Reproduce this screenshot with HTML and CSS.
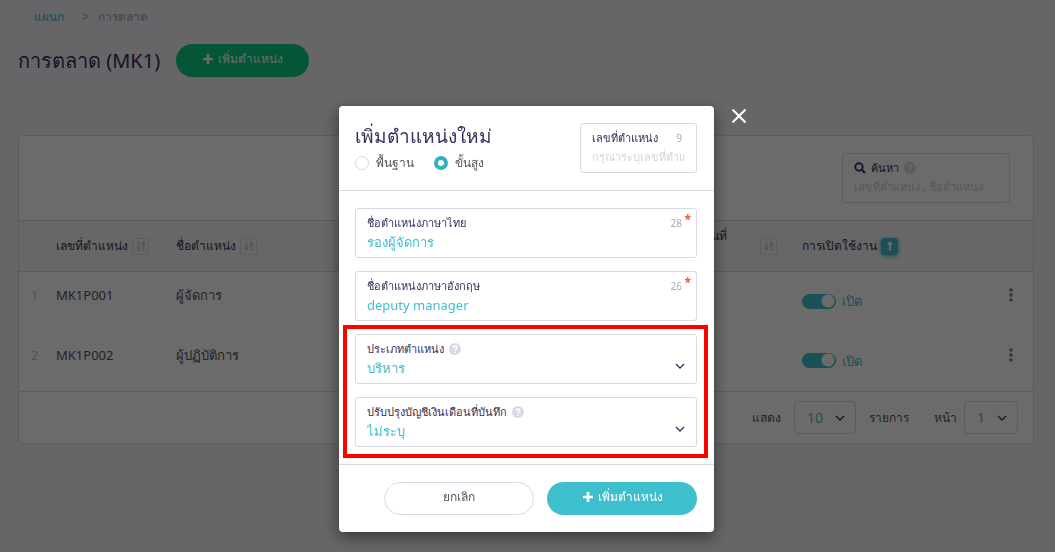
FILE: index.html
```html
<!DOCTYPE html>
<html lang="th">
<head>
<meta charset="utf-8">
<meta name="viewport" content="width=device-width, initial-scale=1">
<title>การตลาด (MK1)</title>
<link rel="stylesheet" href="styles.css">
</head>
<body>
<svg class="sprite" aria-hidden="true">
  <symbol id="plus" viewBox="0 0 12 12"><path d="M6 1v10M1 6h10" fill="none" stroke="currentColor" stroke-width="2.6"/></symbol>
  <symbol id="chevron" viewBox="0 0 10 10"><path d="M1 3l4 4 4-4" fill="none" stroke="currentColor" stroke-width="1.3"/></symbol>
  <symbol id="help" viewBox="0 0 12 12"><circle cx="6" cy="6" r="6" fill="currentColor"/><path d="M4.1 4.7C4.2 2.3 7.9 2.400 7.900 4.600C7.900 6 6 5.900 6 7.300" fill="none" stroke="#fff" stroke-width="1.400"/><circle cx="6" cy="9.200" r=".9" fill="#fff"/></symbol>
  <symbol id="sort" viewBox="0 0 12 12"><path d="M3.500 1v8M8.500 11V3" fill="none" stroke="currentColor" stroke-width="1.800"/><path d="M.8 7.500h5.400L3.500 11zM5.800 4.500h5.400L8.500 1z" fill="currentColor"/></symbol>
  <symbol id="up" viewBox="0 0 12 12"><path d="M6 11V3" fill="none" stroke="currentColor" stroke-width="1.800"/><path d="M3 5h6L6 1z" fill="currentColor"/></symbol>
  <symbol id="search" viewBox="0 0 12 12"><circle cx="5" cy="5" r="3.700" fill="none" stroke="currentColor" stroke-width="1.900"/><path d="M7.800 7.800l3.200 3.200" stroke="currentColor" stroke-width="2.200"/></symbol>
  <symbol id="dots" viewBox="0 0 6 14"><g fill="none" stroke="currentColor" stroke-width=".9"><circle cx="3" cy="2" r="1.200"/><circle cx="3" cy="7" r="1.200"/><circle cx="3" cy="12" r="1.200"/></g></symbol>
</svg>

<div class="page">
  <nav class="crumbs"><a href="#">แผนก</a><span>&gt;</span><span>การตลาด</span></nav>
  <header class="heading">
    <h1>การตลาด (MK1)</h1>
    <button class="btn btn-green" type="button"><svg class="icon"><use href="#plus"/></svg>เพิ่มตำแหน่ง</button>
  </header>
  <main class="card">
    <div class="toolbar">
      <div class="field search">
        <label for="q"><svg class="icon"><use href="#search"/></svg> ค้นหา <svg class="icon help"><use href="#help"/></svg></label>
        <input id="q" type="text" placeholder="เลขที่ตำแหน่ง , ชื่อตำแหน่ง">
      </div>
    </div>
    <table>
      <colgroup><col class="c-num"><col class="c-code"><col class="c-name"><col class="c-date"><col class="c-status"><col class="c-menu"></colgroup>
      <thead>
        <tr>
          <th></th>
          <th><div class="head">เลขที่ตำแหน่ง<button class="sort" type="button" aria-label="เลขที่ตำแหน่ง"><svg class="icon"><use href="#sort"/></svg></button></div></th>
          <th><div class="head">ชื่อตำแหน่ง<button class="sort" type="button" aria-label="ชื่อตำแหน่ง"><svg class="icon"><use href="#sort"/></svg></button></div></th>
          <th><div class="head date"><span>วันที่</span><button class="sort" type="button" aria-label="วันที่"><svg class="icon"><use href="#sort"/></svg></button></div></th>
          <th><div class="head">การเปิดใช้งาน<button class="sort active" type="button" aria-label="การเปิดใช้งาน"><svg class="icon"><use href="#up"/></svg></button></div></th>
          <th></th>
        </tr>
      </thead>
      <tbody>
        <tr>
          <td class="num">1</td><td>MK1P001</td><td>ผู้จัดการ</td><td></td>
          <td><label class="switch"><input type="checkbox" checked>เปิด</label></td>
          <td><button class="more" type="button" aria-label="MK1P001"><svg><use href="#dots"/></svg></button></td>
        </tr>
        <tr>
          <td class="num">2</td><td>MK1P002</td><td>ผู้ปฏิบัติการ</td><td></td>
          <td><label class="switch"><input type="checkbox" checked>เปิด</label></td>
          <td><button class="more" type="button" aria-label="MK1P002"><svg><use href="#dots"/></svg></button></td>
        </tr>
      </tbody>
    </table>
    <footer class="pager">
      <label for="size">แสดง</label>
      <div class="pick"><select id="size"><option>10</option></select><svg class="icon chev"><use href="#chevron"/></svg></div>
      <span class="unit">รายการ</span>
      <label for="pg">หน้า</label>
      <div class="pick small"><select id="pg"><option>1</option></select><svg class="icon chev"><use href="#chevron"/></svg></div>
    </footer>
  </main>
</div>

<div class="overlay">
  <form class="modal" role="dialog" aria-labelledby="dlg">
    <button class="close" type="button" aria-label="ปิด"><svg viewBox="0 0 16 16"><path d="M1.500 1.500l13 13M14.500 1.500l-13 13" stroke="currentColor" stroke-width="2.200"/></svg></button>
    <div class="modal-head">
      <div class="intro">
        <h2 id="dlg">เพิ่มตำแหน่งใหม่</h2>
        <div class="radios">
          <label><input type="radio" name="mode">พื้นฐาน</label>
          <label><input type="radio" name="mode" checked>ขั้นสูง</label>
        </div>
      </div>
      <div class="field code">
        <label for="code">เลขที่ตำแหน่ง<span class="count">9</span></label>
        <input id="code" type="text" placeholder="กรุณาระบุเลขที่ตำแหน่ง">
      </div>
    </div>
    <div class="modal-body">
      <div class="field">
        <label for="th">ชื่อตำแหน่งภาษาไทย<span class="count">28</span></label>
        <input id="th" type="text" value="รองผู้จัดการ"><span class="req">*</span>
      </div>
      <div class="field">
        <label for="en">ชื่อตำแหน่งภาษาอังกฤษ<span class="count">26</span></label>
        <input id="en" type="text" value="deputy manager"><span class="req">*</span>
      </div>
      <div class="marked">
        <div class="field">
          <label for="type">ประเภทตำแหน่ง<svg class="icon help"><use href="#help"/></svg></label>
          <div class="drop"><select id="type"><option>บริหาร</option></select><svg class="icon chev"><use href="#chevron"/></svg></div>
        </div>
        <div class="field">
          <label for="acc">ปรับปรุงบัญชีเงินเดือนที่บันทึก<svg class="icon help"><use href="#help"/></svg></label>
          <div class="drop"><select id="acc"><option>ไม่ระบุ</option></select><svg class="icon chev"><use href="#chevron"/></svg></div>
        </div>
      </div>
    </div>
    <div class="modal-foot">
      <button class="btn btn-line" type="button">ยกเลิก</button>
      <button class="btn btn-teal" type="submit"><svg class="icon"><use href="#plus"/></svg>เพิ่มตำแหน่ง</button>
    </div>
  </form>
</div>
</body>
</html>
```
FILE: styles.css
```css
* { box-sizing: border-box; }
:root { --teal: #3ebfcd; --ink: #35305c; --line: #d9d8e6; }
body {
  margin: 0;
  background: #f3f3f8;
  color: #55545f;
  font: 13px/20px "Noto Sans", "Open Sans", sans-serif;
}
button, input, select { margin: 0; padding: 0; border: 0; background: none; font: inherit; color: inherit; }
h1, h2 { margin: 0; font-weight: 400; color: var(--ink); }
a { color: var(--teal); text-decoration: none; }
.sprite { position: absolute; width: 0; height: 0; }
.icon { width: 12px; height: 12px; flex: none; }
.chev { width: 10px; height: 10px; color: var(--ink); pointer-events: none; }
.help { color: var(--line); }

.page { padding: 7px 21px 20px 18px; }
.crumbs { display: flex; gap: 9px; padding-left: 16px; font-size: 12px; color: #a09fa8; }
.crumbs a { margin-right: 9px; }
.heading { display: flex; align-items: center; gap: 16px; margin: 17px 0 58px; }
.heading h1 { font-size: 20px; line-height: 32px; }

.btn {
  display: flex; align-items: center; justify-content: center; gap: 4px;
  width: 150px; height: 33px; padding-bottom: 3px; border-radius: 17px; font-size: 12px;
}
.btn-green { width: 133px; background: #0cca83; color: #fff; }
.btn-teal { background: var(--teal); color: #fff; }
.btn-line { border: 1px solid var(--line); }

.card { background: #fff; border: 1px solid var(--line); border-radius: 5px; }
.toolbar { display: flex; justify-content: flex-end; padding: 17px 23px; }
.field {
  position: relative; height: 50px; padding: 5px 11px;
  border: 1px solid var(--line); border-radius: 3px; background: #fff;
}
.field label { display: flex; align-items: center; gap: 5px; font-size: 11px; line-height: 18px; color: var(--ink); }
.field input, .field select {
  display: block; width: 100%; height: 20px; line-height: 20px;
  color: var(--teal); outline: 0; appearance: none; border: 0;
}
.field input::placeholder { color: #d3d2dc; opacity: 1; }
.search { width: 168px; }
.search input, .code input { font-size: 11px; }

table { width: 100%; table-layout: fixed; border-collapse: collapse; }
.c-num { width: 37px; }
.c-code { width: 120px; }
.c-name { width: 400px; }
.c-status { width: 200px; }
.c-menu { width: 31px; }
th, td { padding: 0; text-align: left; vertical-align: top; font-weight: 400; }
thead tr { height: 51px; background: #f6f6f7; border: solid var(--line); border-width: 1px 0; }
th { vertical-align: middle; font-size: 12px; color: var(--ink); }
tbody tr { height: 60px; }
tbody { border-bottom: 1px solid var(--line); }
td { padding-top: 13px; }
.num { padding-left: 12px; color: #cbc9d2; }
.head { display: flex; align-items: center; gap: 4px; }
.date { justify-content: flex-end; gap: 33px; padding-right: 25px; }
.date span { padding-bottom: 20px; }
.sort {
  display: grid; place-items: center; width: 17px; height: 17px;
  border: 1px solid var(--line); border-radius: 3px; color: #d2d1da;
}
.sort.active { background: var(--teal); border-color: var(--teal); color: #fff; box-shadow: 0 1px 4px var(--teal); }
.switch { display: flex; align-items: center; gap: 6px; padding-top: 6px; color: var(--teal); }
.switch input {
  appearance: none; width: 34px; height: 15px; border-radius: 8px;
  background: radial-gradient(circle at 26px 7px, #fff 6px, var(--teal) 7px);
}
.more { display: block; color: var(--ink); }
.more svg { display: block; width: 6px; height: 14px; margin: 3px 6px; }
.pager { display: flex; align-items: center; justify-content: flex-end; padding: 9px 15px 9px; font-size: 12px; }
.pick { display: grid; align-items: center; width: 62px; height: 33px; margin: 0 13px; border: 1px solid var(--line); border-radius: 4px; }
.pick select, .pick .chev { grid-area: 1 / 1; }
.pick select { height: 31px; padding-left: 12px; color: var(--teal); appearance: none; font-size: 14px; }
.pick .chev { justify-self: end; margin-right: 10px; }
.pick.small { width: 54px; margin: 0 0 0 7px; }
.unit { margin-right: 25px; }

.overlay {
  position: fixed; inset: 0; display: flex; justify-content: center; align-items: flex-start;
  padding: 106px 2px 20px 0; overflow: auto; background: rgba(0, 0, 0, .58);
}
.modal { position: relative; width: 375px; border-radius: 4px; background: #fff; box-shadow: 0 5px 16px rgba(0, 0, 0, .5); }
.close { position: absolute; top: 2px; right: -33px; width: 16px; height: 16px; color: #fff; }
.close svg { display: block; }
.modal-head { display: flex; justify-content: space-between; padding: 17px 17px 17px 16px; border-bottom: 1px solid var(--line); }
.modal h2 { font-size: 19px; line-height: 26px; }
.radios { display: flex; gap: 20px; padding-top: 4px; }
.radios label { display: flex; align-items: center; gap: 7px; font-size: 12px; }
.radios input { appearance: none; width: 14px; height: 14px; border: 1px solid var(--line); border-radius: 50%; }
.radios input:checked { border: 4px solid #32b1c5; }
.code { width: 117px; }
.field .count { margin-left: auto; padding-right: 3px; font-size: 10px; color: #aaa8b8; }
.req { position: absolute; top: 1px; right: 5px; font-size: 12px; font-weight: 700; color: #f4523b; }
.modal-body { display: grid; gap: 13px; padding: 17px 17px 17px 16px; }
.marked { position: relative; display: grid; gap: 13px; }
.marked::after { content: ""; position: absolute; inset: -9px -11px -11px -12px; border: 4px solid #f00; pointer-events: none; }
.drop { display: grid; align-items: start; }
.drop select, .drop .chev { grid-area: 1 / 1; }
.drop .chev { justify-self: end; margin-top: 3px; }
.modal-foot { display: flex; justify-content: flex-end; gap: 13px; padding: 17px; border-top: 1px solid var(--line); }
```
